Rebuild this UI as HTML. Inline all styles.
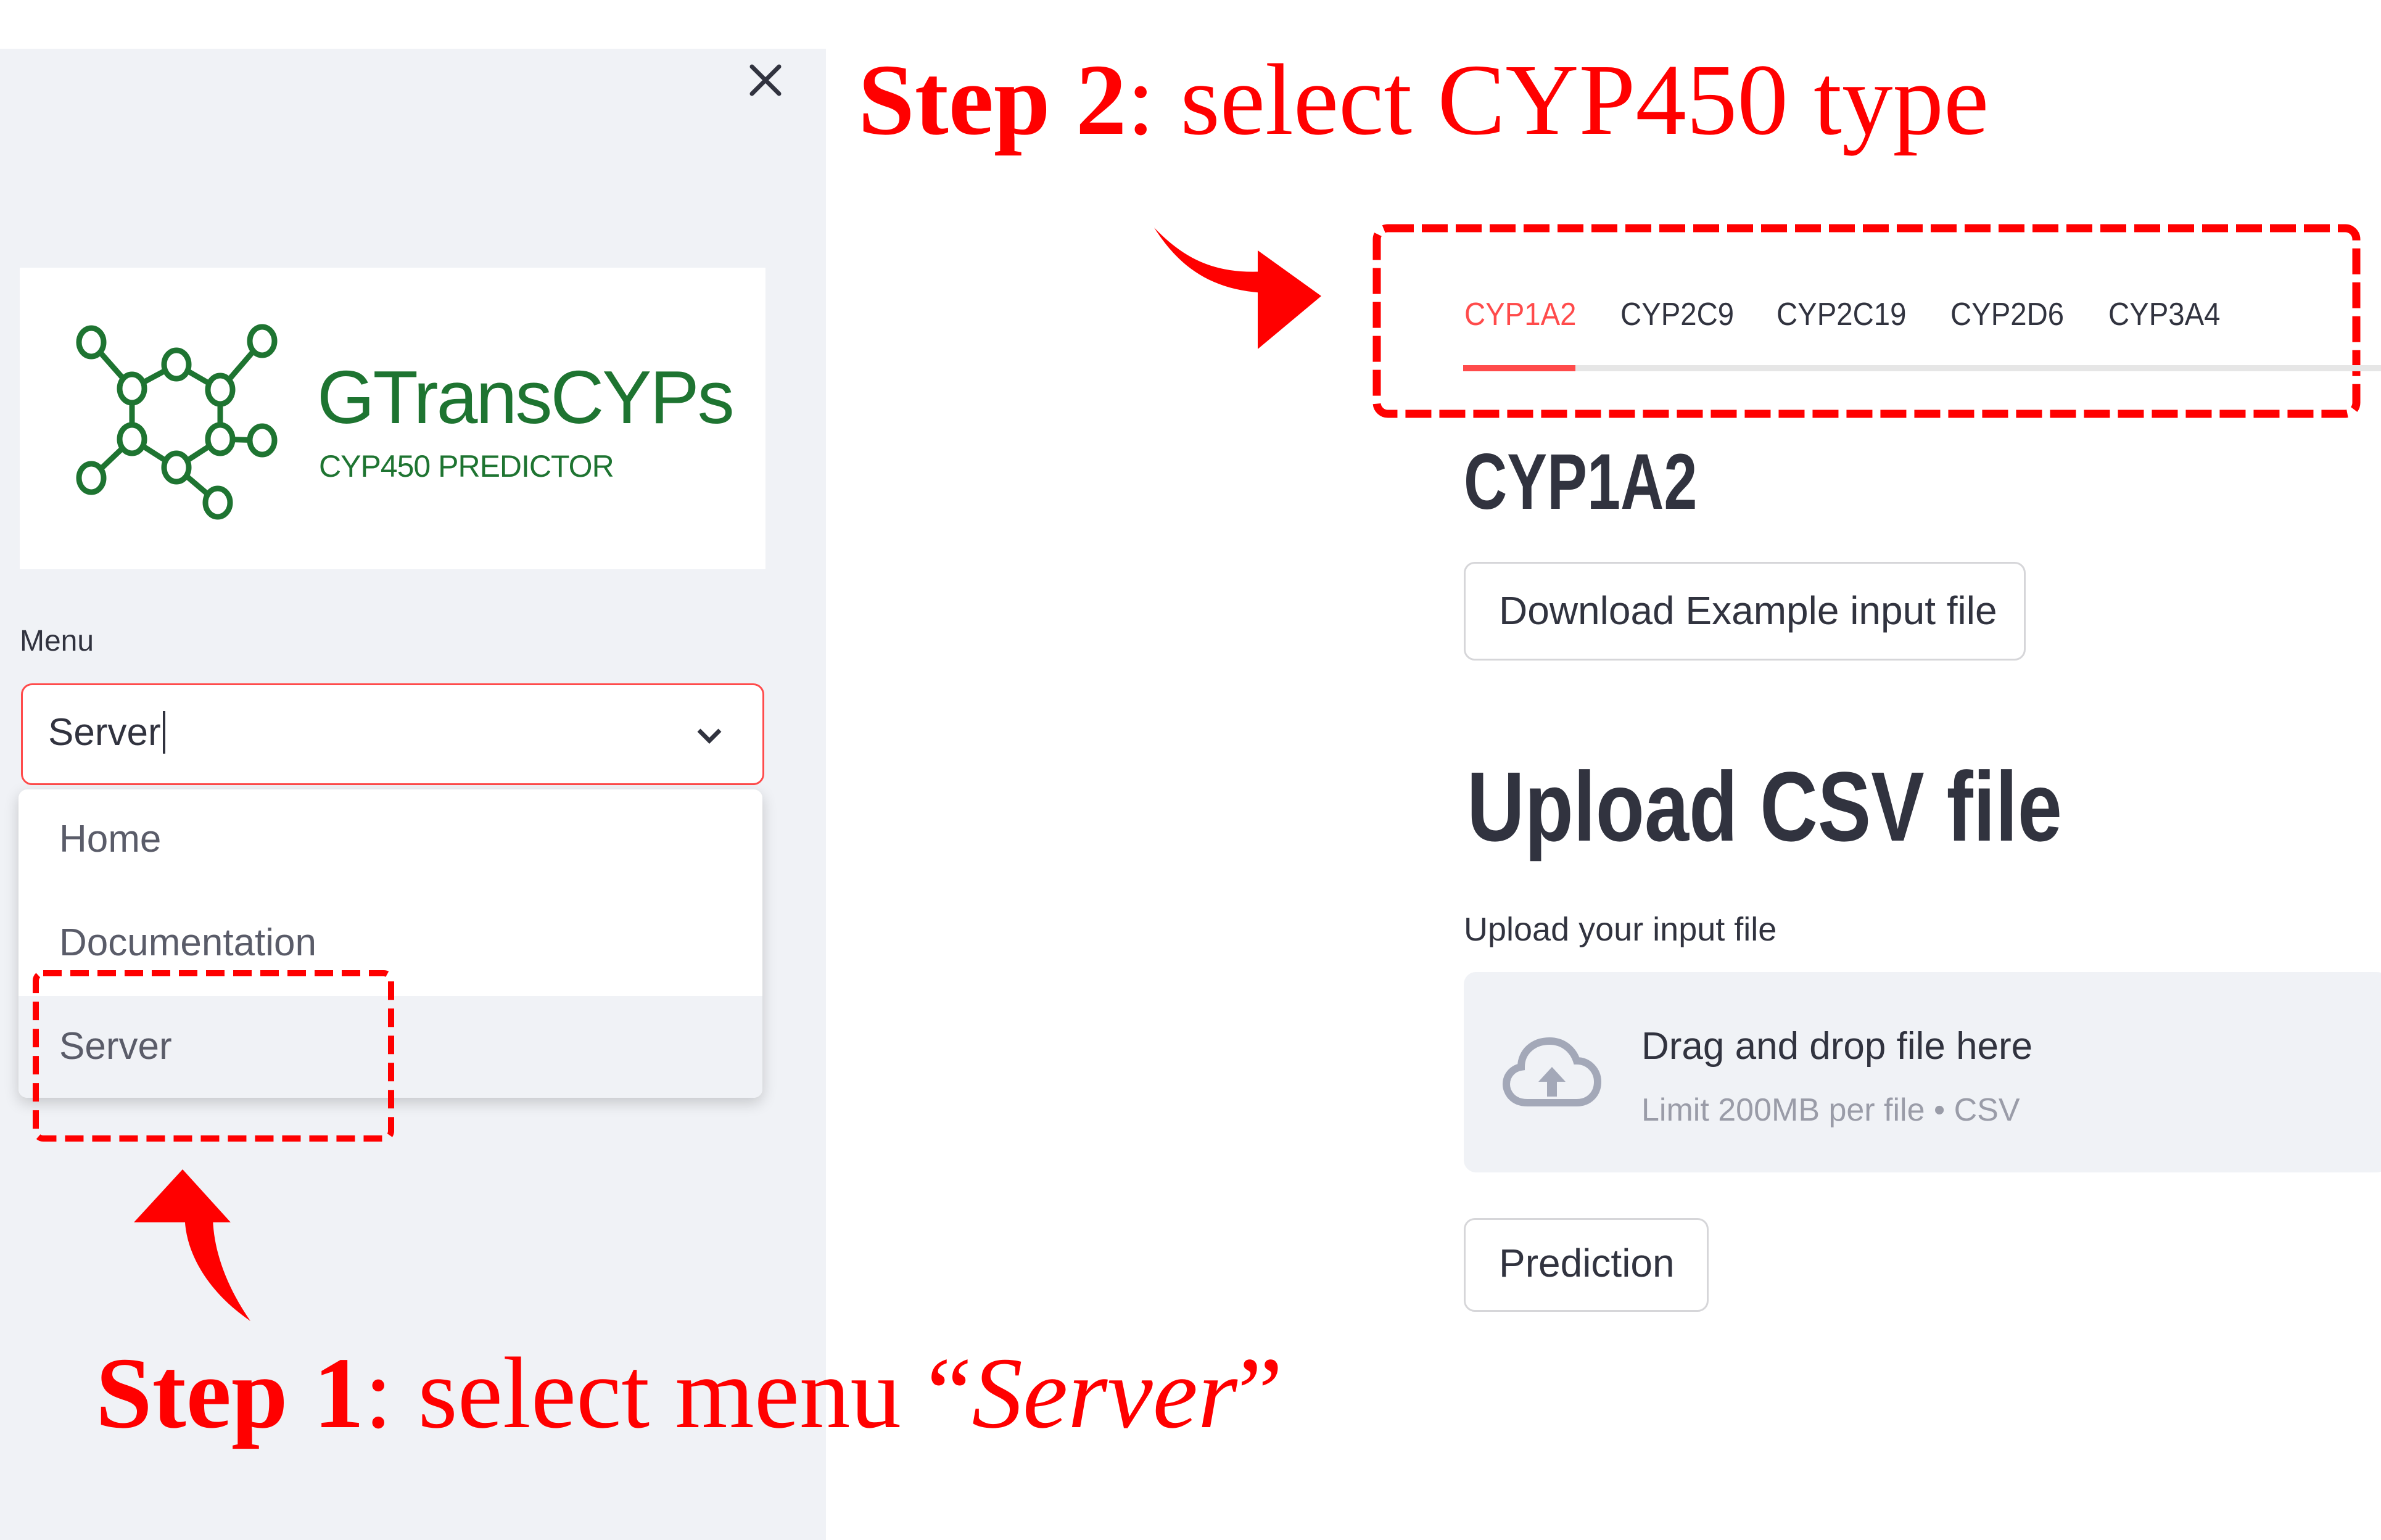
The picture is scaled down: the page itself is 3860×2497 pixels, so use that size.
<!DOCTYPE html>
<html><head><meta charset="utf-8"><style>
html,body{margin:0;padding:0}
body{width:3860px;height:2497px;position:relative;overflow:hidden;background:#fff;font-family:"Liberation Sans",sans-serif;color:#31333f}
.a{position:absolute;white-space:nowrap;line-height:1}
.n{transform:scaleX(1);transform-origin:left center;display:inline-block}
.t{transform:scaleX(.91);transform-origin:left center;display:inline-block}
.step{font-family:"Liberation Serif",serif;color:#f00;font-size:165px}
</style></head><body>
<div class="a" style="left:0;top:79px;width:1339px;height:2418px;background:#f0f2f6"></div>
<svg class="a" style="left:1213px;top:102px" width="56" height="56"><path d="M6 6L50 50M50 6L6 50" stroke="#31333f" stroke-width="7" stroke-linecap="round"/></svg>
<div class="a" style="left:32px;top:434px;width:1209px;height:489px;background:#fff"></div>
<svg class="a" style="left:0;top:0" width="1339" height="923">
<g stroke="#1e7431" stroke-width="9" fill="none">
<path d="M148 555L214 630L286 591L357 632L425 553M214 630L214 712L286 758L357 712L357 632M357 712L425 714M214 712L148 775M286 758L353 815"/>
</g>
<g stroke="#1e7431" stroke-width="9" fill="#fff">
<ellipse cx="148" cy="555" rx="20" ry="23"/><ellipse cx="286" cy="591" rx="20" ry="23"/><ellipse cx="425" cy="553" rx="20" ry="23"/>
<ellipse cx="214" cy="630" rx="20" ry="23"/><ellipse cx="357" cy="632" rx="20" ry="23"/><ellipse cx="214" cy="712" rx="20" ry="23"/>
<ellipse cx="357" cy="712" rx="20" ry="23"/><ellipse cx="286" cy="758" rx="20" ry="23"/><ellipse cx="425" cy="714" rx="20" ry="23"/>
<ellipse cx="148" cy="775" rx="20" ry="23"/><ellipse cx="353" cy="815" rx="20" ry="23"/>
</g></svg>
<div class="a" style="left:514px;top:583px;font-size:122px;color:#1e7431;letter-spacing:-3px"><span style="display:inline-block;transform:scaleX(.985);transform-origin:left">GTransCYPs</span></div>
<div class="a" style="left:517px;top:731px;font-size:50px;color:#1e7431;letter-spacing:-1px">CYP450 PREDICTOR</div>
<div class="a" style="left:32px;top:1016px;font-size:48px;color:#31333f">Menu</div>
<div class="a" style="left:34px;top:1108px;width:1199px;height:159px;border:3px solid #ff4b4b;border-radius:18px;background:#fff"></div>
<div class="a" style="left:78px;top:1157px;font-size:62px"><span class="n">Server<span style="border-left:4px solid #31333f;margin-left:3px">&nbsp;</span></span></div>
<svg class="a" style="left:1128px;top:1178px" width="44" height="30"><path d="M5 6L22 23L39 6" stroke="#31333f" stroke-width="7" fill="none"/></svg>
<div class="a" style="left:30px;top:1280px;width:1206px;height:500px;background:#fff;border-radius:14px;box-shadow:0 8px 24px rgba(0,0,0,.18);overflow:hidden">
<div style="position:absolute;left:0;top:335px;width:100%;height:165px;background:#f0f2f6"></div>
</div>
<div class="a" style="left:96px;top:1330px;font-size:62px;color:#5a5c69">Home</div>
<div class="a" style="left:96px;top:1498px;font-size:62px;color:#5a5c69">Documentation</div>
<div class="a" style="left:96px;top:1666px;font-size:62px;color:#5a5c69">Server</div>
<svg class="a" style="left:50px;top:1570px" width="592" height="284"><rect x="8" y="8" width="576" height="268" rx="12" fill="none" stroke="#f00" stroke-width="10" stroke-dasharray="30 14"/></svg>
<svg class="a" style="left:0;top:1850px" width="500" height="320">
<path d="M406 292C330 240 295 170 300 110L345 120C345 180 370 240 406 292Z" fill="#f00"/>
<path d="M296 46L217 132L374 132Z" fill="#f00"/>
</svg>
<div class="a step" style="left:155px;top:2176px"><b>Step 1</b>: select menu “<i>Server</i>”</div>
<div class="a step" style="left:1391px;top:79px"><b>Step 2</b>: select CYP450 type</div>
<svg class="a" style="left:1850px;top:350px" width="320" height="240">
<path d="M21 19C60 80 110 120 200 125L200 90C120 95 70 70 21 19Z" fill="#f00"/>
<path d="M292 130L189 56L189 216Z" fill="#f00"/>
</svg>
<svg class="a" style="left:2220px;top:358px" width="1610" height="325"><rect x="12" y="12" width="1588" height="301" rx="18" fill="none" stroke="#f00" stroke-width="13" stroke-dasharray="42 13"/></svg>
<div class="a" style="left:2372px;top:592px;width:1488px;height:10px;background:#e6e6e6"></div>
<div class="a" style="left:2372px;top:592px;width:182px;height:10px;background:#ff4b4b"></div>
<div class="a" style="left:2374px;top:484px;font-size:52px;color:#ff4b4b"><span class="t">CYP1A2</span></div>
<div class="a" style="left:2627px;top:484px;font-size:52px"><span class="t">CYP2C9</span></div>
<div class="a" style="left:2880px;top:484px;font-size:52px"><span class="t">CYP2C19</span></div>
<div class="a" style="left:3162px;top:484px;font-size:52px"><span class="t">CYP2D6</span></div>
<div class="a" style="left:3418px;top:484px;font-size:52px"><span class="t">CYP3A4</span></div>
<div class="a" style="left:2373px;top:718px;font-size:128px;font-weight:bold"><span class="n" style="transform:scaleX(.76)">CYP1A2</span></div>
<div class="a" style="left:2373px;top:911px;width:905px;height:154px;border:3px solid #d6d6d9;border-radius:18px;background:#fff"></div>
<div class="a" style="left:2430px;top:958px;font-size:64px">Download Example input file</div>
<div class="a" style="left:2378px;top:1228px;font-size:160px;font-weight:bold"><span class="n" style="transform:scaleX(.81)">Upload CSV file</span></div>
<div class="a" style="left:2373px;top:1480px;font-size:54px">Upload your input file</div>
<div class="a" style="left:2373px;top:1576px;width:1500px;height:325px;background:#f0f2f6;border-radius:20px"></div>
<svg class="a" style="left:2436px;top:1680px" width="160" height="120">
<path d="M40 108C15 108 6 90 6 78C6 62 18 52 30 50C30 25 50 8 76 8C100 8 115 24 120 40C140 40 154 56 154 74C154 94 140 108 120 108Z" fill="none" stroke="#a3a8b8" stroke-width="12"/>
<path d="M80 50L58 74H72V98H88V74H102Z" fill="#a3a8b8"/>
</svg>
<div class="a" style="left:2661px;top:1666px;font-size:62px">Drag and drop file here</div>
<div class="a" style="left:2661px;top:1774px;font-size:52px;color:#9a9ca8">Limit 200MB per file • CSV</div>
<div class="a" style="left:2373px;top:1975px;width:391px;height:146px;border:3px solid #d6d6d9;border-radius:18px;background:#fff"></div>
<div class="a" style="left:2430px;top:2016px;font-size:64px">Prediction</div>
</body></html>
